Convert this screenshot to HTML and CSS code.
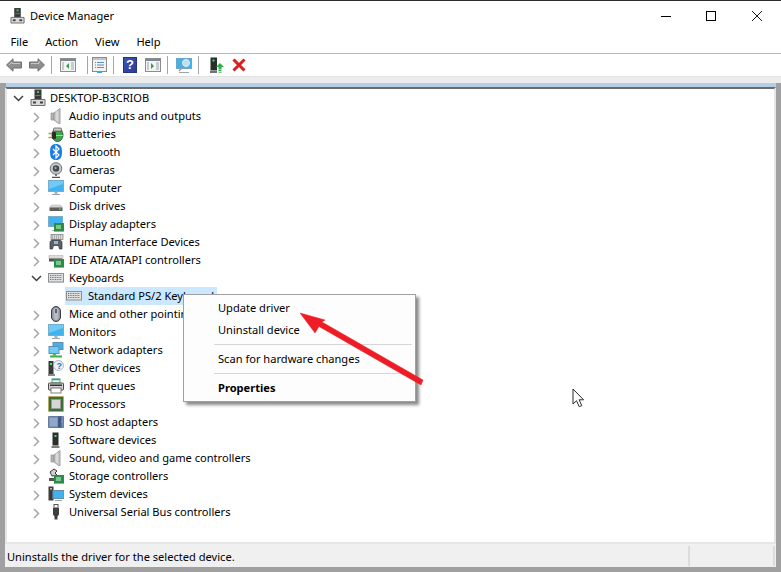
FILE: index.html
```html
<!DOCTYPE html>
<html lang="en">
<head>
<meta charset="utf-8">
<title>Device Manager</title>
<link rel="stylesheet" href="styles.css">
</head>
<body>
<svg class="defs" width="0" height="0" aria-hidden="true">
  <defs>
    <symbol id="i-host" viewBox="0 0 16 18">
      <rect x="4.500" y="0.500" width="7" height="10" fill="#3a3a3a"/>
      <rect x="7" y="2" width="2" height="2" fill="#2fd05a"/>
      <rect x="5.500" y="6" width="5" height="1" fill="#777"/>
      <path d="M1 10.500h14v6H1z" fill="#d9d9d9" stroke="#6f6f6f"/>
      <rect x="3" y="12.500" width="3" height="2" fill="#444"/>
      <rect x="10" y="12.500" width="3" height="2" fill="#444"/>
    </symbol>
    <symbol id="i-speaker" viewBox="0 0 16 16">
      <path d="M3 5h3v7H3z" fill="#b5b5b5" stroke="#8f8f8f" stroke-width=".7"/>
      <path d="M6 5l6-4.500v16l-6-4.500z" fill="#c9c9c9" stroke="#8d8d8d" stroke-width=".8"/>
      <path d="M9 3v10" stroke="#e9e9e9"/>
    </symbol>
    <symbol id="i-battery" viewBox="0 0 16 16">
      <ellipse cx="9.500" cy="9" rx="5.500" ry="6.500" fill="#3fa648" stroke="#2d5f35"/>
      <path d="M6 2l7 0 1 3H5z" fill="#c8d2c8" stroke="#4b4b4b" stroke-width=".7"/>
      <path d="M0.500 7.500h4M0.500 11.500h4" stroke="#b59a32" stroke-width="1.500"/>
      <rect x="4" y="6" width="4" height="7" rx="1" fill="#2c2c2c"/>
      <path d="M8 9.500h7" stroke="#9fdca0"/>
    </symbol>
    <symbol id="i-bt" viewBox="0 0 16 16">
      <path d="M8 0c4 0 6 2 6 8s-2 8-6 8-6-2-6-8 2-8 6-8z" fill="#1a7ee6"/>
      <path d="M5 5l6 6-3 3V2l3 3-6 6" fill="none" stroke="#fff" stroke-width="1.200"/>
    </symbol>
    <symbol id="i-camera" viewBox="0 0 16 16">
      <circle cx="8" cy="6.500" r="5.800" fill="#c9c9c9" stroke="#6d6d6d"/>
      <circle cx="8" cy="6.500" r="3.200" fill="#404850"/>
      <circle cx="7.500" cy="6" r="1.200" fill="#8fa3b5"/>
      <path d="M7 12h2v2H7z" fill="#777"/>
      <path d="M4 15.500h8" stroke="#555" stroke-width="1.500"/>
    </symbol>
    <symbol id="i-monitor" viewBox="0 0 16 16">
      <rect x="0.500" y="0.500" width="15" height="11" fill="#41b2ee" stroke="#78aecb"/>
      <path d="M1 1h14v3L1 9z" fill="#6fcaf6"/>
      <rect x="6.500" y="12" width="3" height="2" fill="#a8b4bc"/>
      <path d="M4 14.500h8" stroke="#9aa6ae"/>
    </symbol>
    <symbol id="i-disk" viewBox="0 0 16 16">
      <path d="M2 9.500c0-1.500 1-2.500 2-2.500h8c1 0 2 1 2 2.500z" fill="#d5d5d5" stroke="#bdbdbd" stroke-width=".6"/>
      <rect x="1.500" y="9.500" width="13" height="3.500" fill="#5d5d5d"/>
      <rect x="11" y="10.500" width="2" height="1" fill="#5fe06f"/>
    </symbol>
    <symbol id="i-display" viewBox="0 0 16 16">
      <rect x="0.500" y="0.500" width="14" height="10" fill="#41b2ee" stroke="#78aecb"/>
      <path d="M4 14.500h4" stroke="#9aa6ae"/>
      <rect x="6" y="7" width="10" height="8" fill="#2e8c4a"/>
      <rect x="8" y="9" width="5" height="4" fill="#7cc68e"/>
      <path d="M6 15.500h10" stroke="#c8a838"/>
    </symbol>
    <symbol id="i-hid" viewBox="0 0 16 16">
      <rect x="3" y="0.500" width="12" height="5" fill="#d8d8d8" stroke="#777" stroke-width=".7"/>
      <path d="M4 2h10M4 4h10" stroke="#888" stroke-dasharray="1 1"/>
      <path d="M2 15V9c0-2 1-3 3-3h6c2 0 3 1 3 3v6h-2.500l-1-3.500h-5l-1 3.500z" fill="#5a6068" stroke="#30343a" stroke-width=".7"/>
      <rect x="6" y="7" width="4" height="3" fill="#9fb3d0"/>
    </symbol>
    <symbol id="i-ide" viewBox="0 0 16 16">
      <path d="M1 3.500h14v3H1z" fill="#dcdcdc" stroke="#b5b5b5" stroke-width=".6"/>
      <rect x="1" y="6.500" width="13" height="3" fill="#555"/>
      <rect x="6" y="7" width="10" height="8" fill="#2e8c4a"/>
      <rect x="8" y="9" width="5" height="4" fill="#7cc68e"/>
      <path d="M6 15.500h10" stroke="#c8a838"/>
    </symbol>
    <symbol id="i-keyboard" viewBox="0 0 16 16">
      <rect x="0.500" y="3.500" width="15" height="8.500" fill="#dfe0e2" stroke="#8a8d92"/>
      <path d="M2 5.500h12M2 7.500h12M2 9.500h12" stroke="#70747a" stroke-dasharray="1 .7"/>
      <path d="M1 12.500h14" stroke="#b7b9bc"/>
    </symbol>
    <symbol id="i-mouse" viewBox="0 0 16 16">
      <rect x="3.500" y="0.500" width="9" height="15" rx="4.500" fill="#8b939c" stroke="#3a3e44"/>
      <rect x="5.500" y="2" width="5" height="12" rx="2.500" fill="#b6bcc3"/>
      <path d="M8 3v4" stroke="#3a3e44" stroke-width="1.400"/>
    </symbol>
    <symbol id="i-network" viewBox="0 0 16 16">
      <rect x="5" y="0.500" width="10" height="7" fill="#41b2ee" stroke="#5f8fad"/>
      <rect x="1" y="4.500" width="10" height="7" fill="#6fcaf6" stroke="#5f8fad"/>
      <path d="M2 14.500h12" stroke="#3fae4b" stroke-width="2"/>
      <path d="M6 11.500l-2 2h5l-2-2z" fill="#3fae4b"/>
    </symbol>
    <symbol id="i-other" viewBox="0 0 16 16">
      <rect x="0.500" y="1" width="5" height="13" fill="#3a3a3a"/>
      <rect x="2" y="3" width="2" height="2" fill="#3fe06a"/>
      <path d="M0 15h7" stroke="#555" stroke-width="1.400"/>
      <circle cx="10.500" cy="5.500" r="5" fill="#eef3f8" stroke="#93a8bc" stroke-width=".8"/>
      <text class="q" x="8.500" y="9">?</text>
    </symbol>
    <symbol id="i-printer" viewBox="0 0 16 16">
      <rect x="4" y="1" width="8" height="4" fill="#f4f4f4" stroke="#59b85a"/>
      <path d="M4 1.500h8" stroke="#2f8fd8" stroke-width="1.500"/>
      <rect x="0.500" y="5" width="15" height="7" rx="1" fill="#d0d0d0" stroke="#4c4c4c"/>
      <rect x="3" y="10" width="10" height="5" fill="#fff" stroke="#4c4c4c" stroke-width=".7"/>
      <rect x="2" y="6.500" width="12" height="1.500" fill="#333"/>
    </symbol>
    <symbol id="i-cpu" viewBox="0 0 16 16">
      <rect x="0.500" y="0.500" width="15" height="15" fill="#3d6e37" stroke="#c9a53a" stroke-dasharray="1 1"/>
      <rect x="3.500" y="3.500" width="9" height="9" fill="#d6d6d6" stroke="#9a9a9a"/>
    </symbol>
    <symbol id="i-sd" viewBox="0 0 16 16">
      <path d="M0.500 2.500h15v11H0.500z" fill="#7c94b8" stroke="#677d9d"/>
      <path d="M10 2.500h3.500v4l-1 1 1 1v5H10z" fill="#3f5a86"/>
      <rect x="2" y="4" width="7" height="8" fill="#93a8c8"/>
    </symbol>
    <symbol id="i-tower" viewBox="0 0 16 16">
      <rect x="4.500" y="0.500" width="6" height="13" fill="#2e2e2e"/>
      <rect x="6.500" y="3" width="2" height="2" fill="#3fe06a"/>
      <path d="M3.500 15h8" stroke="#555" stroke-width="1.500"/>
    </symbol>
    <symbol id="i-storage" viewBox="0 0 16 16">
      <path d="M2 4l4-3 3 2-2 2 2 2-5 1z" fill="#d0d0d0" stroke="#3c3c3c"/>
      <rect x="1" y="10" width="5" height="3" fill="#555"/>
      <rect x="6" y="7" width="10" height="8" fill="#2e8c4a"/>
      <rect x="8" y="9" width="5" height="4" fill="#7cc68e"/>
      <path d="M6 15.500h10" stroke="#c8a838"/>
    </symbol>
    <symbol id="i-system" viewBox="0 0 16 16">
      <rect x="0.500" y="0.500" width="5" height="14" fill="#3c3c3c"/>
      <rect x="2" y="2" width="2" height="1.500" fill="#bdbdbd"/>
      <rect x="5" y="4.500" width="11" height="8" fill="#41b2ee" stroke="#5f8fad"/>
      <path d="M7 14.500h7" stroke="#9aa6ae"/>
    </symbol>
    <symbol id="i-usb" viewBox="0 0 16 16">
      <rect x="6" y="0.500" width="4" height="3.500" fill="none" stroke="#555"/>
      <path d="M5 4h6v6.500L9.500 12.500v3h-3v-3L5 10.500z" fill="#3e3e3e"/>
    </symbol>
    <symbol id="chev" viewBox="0 0 7 11">
      <path d="M1 1l4.500 4.500L1 10" fill="none" stroke="#a6a6a6" stroke-width="1.500"/>
    </symbol>
    <symbol id="chev-open" viewBox="0 0 11 7">
      <path d="M1 1l4.500 4.500L10 1" fill="none" stroke="#404040" stroke-width="1.500"/>
    </symbol>
  </defs>
</svg>

<div class="window">
  <header class="titlebar">
    <svg class="title-icon"><use href="#i-host"/></svg>
    <span class="title-text">Device Manager</span>
    <div class="win-controls">
      <svg class="win-btn" viewBox="0 0 10 10"><path d="M0 5.500h10" stroke="#000"/></svg>
      <svg class="win-btn" viewBox="0 0 10 10"><rect x=".5" y=".5" width="9" height="9" fill="none" stroke="#000"/></svg>
      <svg class="win-btn win-close" viewBox="0 0 10 10"><path d="M0 0l10 10M10 0L0 10" stroke="#000" stroke-width=".9"/></svg>
    </div>
  </header>

  <nav class="menubar">
    <span class="menu-item">File</span>
    <span class="menu-item">Action</span>
    <span class="menu-item">View</span>
    <span class="menu-item">Help</span>
  </nav>

  <div class="toolbar">
    <svg class="tool tool-back" viewBox="0 0 16 14"><path d="M0.500 7L7 .800V4h8.500v6H7v3.200z" fill="#8f8f8f" stroke="#6f6f6f"/><path d="M3 7l3-3v1.500h8" fill="none" stroke="#c6c6c6"/></svg>
    <svg class="tool" viewBox="0 0 16 14"><path d="M15.500 7L9 .800V4H.5v6H9v3.200z" fill="#8f8f8f" stroke="#6f6f6f"/><path d="M2 5.500h8V3" fill="none" stroke="#c6c6c6"/></svg>
    <i class="tool-sep sep-a"></i>
    <svg class="tool" viewBox="0 0 16 14"><rect x=".5" y=".5" width="15" height="13" fill="#f4f4f4" stroke="#8c8c8c"/><path d="M1 1h14v2H1z" fill="#7e8794"/><path d="M9 5v6L6 8z" fill="#2fa04a"/><path d="M2 5h2M2 7h2M2 9h2M2 11h2M11 5h3M11 7h3M11 9h3M11 11h3" stroke="#9aa3ae"/></svg>
    <i class="tool-sep sep-b"></i>
    <svg class="tool tool-doc" viewBox="0 0 15 16"><rect x=".5" y=".5" width="14" height="14" fill="#f2f2f2" stroke="#8c8c8c"/><path d="M1 1h13v2H1z" fill="#c0c4c9"/><path d="M3 5.500h1M5 5.500h7M3 8h1M5 8h7M3 10.500h1M5 10.500h7" stroke="#5a8fc0"/><path d="M5 15.500h5" stroke="#2fa8e8" stroke-width="1.500"/></svg>
    <i class="tool-sep sep-c"></i>
    <div class="tool-help">?</div>
    <svg class="tool" viewBox="0 0 16 14"><rect x=".5" y=".5" width="15" height="13" fill="#f4f4f4" stroke="#8c8c8c"/><path d="M1 1h14v2H1z" fill="#7e8794"/><path d="M6 5v6l3-3z" fill="#2fa04a"/><path d="M2 5h2M2 7h2M2 9h2M2 11h2M11 5h3M11 7h3M11 9h3M11 11h3" stroke="#9aa3ae"/></svg>
    <i class="tool-sep sep-d"></i>
    <svg class="tool tool-scan" viewBox="0 0 16 15"><rect x=".5" y=".5" width="15" height="10" fill="#41b2ee" stroke="#6ea6c8"/><circle cx="10" cy="5" r="3.500" fill="#b6e2f8" stroke="#e9e9e9"/><path d="M7.500 8L3 13" stroke="#9a9a9a" stroke-width="1.300"/><path d="M3 14.500h10" stroke="#9aa6ae"/></svg>
    <i class="tool-sep sep-e"></i>
    <svg class="tool tool-update" viewBox="0 0 14 16"><rect x=".5" y=".5" width="6.500" height="13" fill="#2c2c2c"/><rect x="2.500" y="2.500" width="2" height="2" fill="#3fe06a"/><path d="M0 15h7" stroke="#444" stroke-width="1.500"/><path d="M10 6l4 4h-2.500v2.500h-3V10H6z" fill="#2fae4b"/><path d="M8.500 13.500h3M8.500 15.200h3" stroke="#2fae4b"/></svg>
    <svg class="tool tool-x" viewBox="0 0 14 14"><path d="M1.500 1.500l11 11M12.500 1.500l-11 11" stroke="#d81e1e" stroke-width="3"/></svg>
  </div>

  <div class="tool-strip"></div>

  <div class="frame">
    <div class="blue-bar"></div>
    <main class="tree">
      <div class="row row-root"><svg class="chev-open"><use href="#chev-open"/></svg><svg class="ico ico-host"><use href="#i-host"/></svg><span>DESKTOP-B3CRIOB</span></div>
      <div class="row"><svg class="chev"><use href="#chev"/></svg><svg class="ico"><use href="#i-speaker"/></svg><span>Audio inputs and outputs</span></div>
      <div class="row"><svg class="chev"><use href="#chev"/></svg><svg class="ico"><use href="#i-battery"/></svg><span>Batteries</span></div>
      <div class="row"><svg class="chev"><use href="#chev"/></svg><svg class="ico"><use href="#i-bt"/></svg><span>Bluetooth</span></div>
      <div class="row"><svg class="chev"><use href="#chev"/></svg><svg class="ico"><use href="#i-camera"/></svg><span>Cameras</span></div>
      <div class="row"><svg class="chev"><use href="#chev"/></svg><svg class="ico"><use href="#i-monitor"/></svg><span>Computer</span></div>
      <div class="row"><svg class="chev"><use href="#chev"/></svg><svg class="ico"><use href="#i-disk"/></svg><span>Disk drives</span></div>
      <div class="row"><svg class="chev"><use href="#chev"/></svg><svg class="ico"><use href="#i-display"/></svg><span>Display adapters</span></div>
      <div class="row"><svg class="chev"><use href="#chev"/></svg><svg class="ico"><use href="#i-hid"/></svg><span>Human Interface Devices</span></div>
      <div class="row"><svg class="chev"><use href="#chev"/></svg><svg class="ico"><use href="#i-ide"/></svg><span>IDE ATA/ATAPI controllers</span></div>
      <div class="row row-open"><svg class="chev-open"><use href="#chev-open"/></svg><svg class="ico"><use href="#i-keyboard"/></svg><span>Keyboards</span></div>
      <div class="row row-child"><svg class="ico"><use href="#i-keyboard"/></svg><span>Standard PS/2 Keyboard</span></div>
      <div class="row"><svg class="chev"><use href="#chev"/></svg><svg class="ico"><use href="#i-mouse"/></svg><span>Mice and other pointing devices</span></div>
      <div class="row"><svg class="chev"><use href="#chev"/></svg><svg class="ico"><use href="#i-monitor"/></svg><span>Monitors</span></div>
      <div class="row"><svg class="chev"><use href="#chev"/></svg><svg class="ico"><use href="#i-network"/></svg><span>Network adapters</span></div>
      <div class="row"><svg class="chev"><use href="#chev"/></svg><svg class="ico"><use href="#i-other"/></svg><span>Other devices</span></div>
      <div class="row"><svg class="chev"><use href="#chev"/></svg><svg class="ico"><use href="#i-printer"/></svg><span>Print queues</span></div>
      <div class="row"><svg class="chev"><use href="#chev"/></svg><svg class="ico"><use href="#i-cpu"/></svg><span>Processors</span></div>
      <div class="row"><svg class="chev"><use href="#chev"/></svg><svg class="ico"><use href="#i-sd"/></svg><span>SD host adapters</span></div>
      <div class="row"><svg class="chev"><use href="#chev"/></svg><svg class="ico"><use href="#i-tower"/></svg><span>Software devices</span></div>
      <div class="row"><svg class="chev"><use href="#chev"/></svg><svg class="ico"><use href="#i-speaker"/></svg><span>Sound, video and game controllers</span></div>
      <div class="row"><svg class="chev"><use href="#chev"/></svg><svg class="ico"><use href="#i-storage"/></svg><span>Storage controllers</span></div>
      <div class="row"><svg class="chev"><use href="#chev"/></svg><svg class="ico"><use href="#i-system"/></svg><span>System devices</span></div>
      <div class="row"><svg class="chev"><use href="#chev"/></svg><svg class="ico"><use href="#i-usb"/></svg><span>Universal Serial Bus controllers</span></div>
    </main>
    <footer class="statusbar">
      <span class="status-main">Uninstalls the driver for the selected device.</span>
      <i class="status-cell"></i>
      <i class="status-end"></i>
    </footer>
  </div>
</div>

<div class="context-menu">
  <div class="cm-item">Update driver</div>
  <div class="cm-item">Uninstall device</div>
  <div class="cm-sep"></div>
  <div class="cm-item">Scan for hardware changes</div>
  <div class="cm-sep"></div>
  <div class="cm-item cm-bold">Properties</div>
</div>

<svg class="red-arrow" viewBox="0 0 130 80"><path d="M127 72L26 14 29 12 4 5 19 25 23 18.500 125 77z" fill="#ee1c25" stroke="#ee1c25" stroke-width=".5" stroke-linejoin="round"/></svg>

<svg class="cursor" viewBox="0 0 13 20"><path d="M1 1v15l3.500-3.300 2.700 6 2.600-1.100-2.700-5.800H11.500z" fill="#fff" stroke="#2a2a2a" stroke-width="1"/></svg>
</body>
</html>
```

FILE: styles.css
```css
* { box-sizing: border-box; }

html, body {
  margin: 0;
  padding: 0;
  width: 781px;
  height: 572px;
  overflow: hidden;
  background: #fff;
}

body {
  position: relative;
  font-family: "Noto Sans", "Liberation Sans", sans-serif;
  font-size: 11.1px;
  color: #000;
}

.defs { position: absolute; }

.q {
  font-family: "Liberation Sans", sans-serif;
  font-size: 9px;
  font-weight: bold;
  fill: #2e6fb5;
}

.window {
  display: flex;
  flex-direction: column;
  height: 572px;
}

/* title bar */
.titlebar {
  display: flex;
  align-items: center;
  height: 30px;
  border-top: 1px solid #2b2b2b;
  padding-left: 10px;
  flex: none;
}

.title-icon {
  width: 15px;
  height: 18px;
  margin-right: 5px;
}

.win-controls {
  display: flex;
  align-items: center;
  gap: 35px;
  margin-left: auto;
  margin-right: 19px;
}

.win-btn {
  width: 10px;
  height: 10px;
}

.win-close { margin-left: 1px; }

/* menu */
.menubar {
  display: flex;
  align-items: center;
  height: 24px;
  padding-left: 2px;
  border-bottom: 1px solid #b5b5c2;
  flex: none;
}

.menu-item {
  padding: 0 8.5px;
}

/* toolbar */
.toolbar {
  display: flex;
  align-items: center;
  height: 22px;
  padding-left: 6px;
  flex: none;
}

.tool {
  width: 16px;
  height: 14px;
  flex: none;
}

.tool-back { margin-right: 7px; }

.tool-sep {
  display: block;
  width: 1px;
  height: 18px;
  background: #a5a5a5;
  flex: none;
}

.sep-a { margin: 0 8px 0 6px; }
.sep-b { margin: 0 4px 0 11px; }
.sep-c { margin: 0 9px 0 6px; }
.sep-d { margin: 0 8px 0 6px; }
.sep-e { margin: 0 11px 0 6px; }

.tool-doc { width: 15px; height: 16px; }

.tool-help {
  width: 14px;
  height: 16px;
  margin-right: 8px;
  background: linear-gradient(135deg, #3a54b8, #2a3b94);
  border: 1px solid #25327d;
  color: #fff;
  font: bold 13px/14px "Liberation Sans", sans-serif;
  text-align: center;
}

.tool-scan { height: 15px; }

.tool-update {
  width: 14px;
  height: 16px;
  margin-right: 8px;
}

.tool-x {
  width: 14px;
  height: 14px;
}

.tool-strip {
  height: 7px;
  background: #ececec;
  border-top: 1px solid #e2e2e2;
  flex: none;
}

/* framed client area */
.frame {
  display: flex;
  flex-direction: column;
  flex: 1;
  min-height: 0;
  background: #a0a0a0;
  padding: 0 5px 5px;
}

.blue-bar {
  height: 4px;
  background: #b3cfe8;
  margin-left: 1px;
  flex: none;
}

.tree {
  flex: 1;
  min-height: 0;
  background: #fff;
  border-top: 2px solid #6a6a6a;
  border-left: 2px solid #e6e6e6;
  border-right: 2px solid #e6e6e6;
  border-bottom: 2px solid #e6e6e6;
}

.row {
  display: flex;
  align-items: center;
  height: 18px;
  padding-left: 26px;
  white-space: nowrap;
}

.row span { padding-bottom: 2px; }

.chev {
  width: 7px;
  height: 11px;
  margin-top: 2px;
  flex: none;
}

.chev-open {
  width: 11px;
  height: 7px;
  margin: 1px -2px 0 -2px;
  flex: none;
}

.ico {
  width: 16px;
  height: 16px;
  margin: 0 5px 0 8px;
  flex: none;
}

.row-root { padding-left: 6px; }
.row-root .chev-open { margin: 1px 0 0 0; }
.ico-host { height: 18px; margin: 0 4px 0 6px; }

.row-child {
  margin-left: 58px;
  padding-left: 1px;
  width: 152px;
  background: #cce8ff;
}

.row-child .ico { margin: 0 6px 0 0; }

/* status bar */
.statusbar {
  display: flex;
  align-items: center;
  height: 23px;
  background: #f0f0f0;
  padding-left: 2px;
  flex: none;
}

.status-main {
  flex: 1;
  padding-top: 2px;
}

.status-cell {
  width: 2px;
  height: 20px;
  background: #dcdcdc;
  margin-right: 83px;
}

.status-end {
  width: 2px;
  height: 20px;
  background: #dcdcdc;
  margin-right: 1px;
}

/* context menu */
.context-menu {
  position: absolute;
  left: 183px;
  top: 294px;
  width: 233px;
  height: 108px;
  background: #fdfdfd;
  border: 1px solid #a0a0a0;
  padding-top: 2px;
  box-shadow: 3px 3px 3px #8a8a8a;
}

.cm-item {
  display: flex;
  align-items: center;
  height: 22px;
  padding-left: 34px;
  padding-bottom: 2px;
}

.cm-bold { font-weight: bold; }

.cm-sep {
  height: 1px;
  margin: 3px 3px 3px 30px;
  background: #d7d7d7;
}

/* annotation */
.red-arrow {
  position: absolute;
  left: 296px;
  top: 308px;
  width: 130px;
  height: 80px;
  overflow: visible;
}

.cursor {
  position: absolute;
  left: 572px;
  top: 388px;
  width: 13px;
  height: 20px;
}
```
